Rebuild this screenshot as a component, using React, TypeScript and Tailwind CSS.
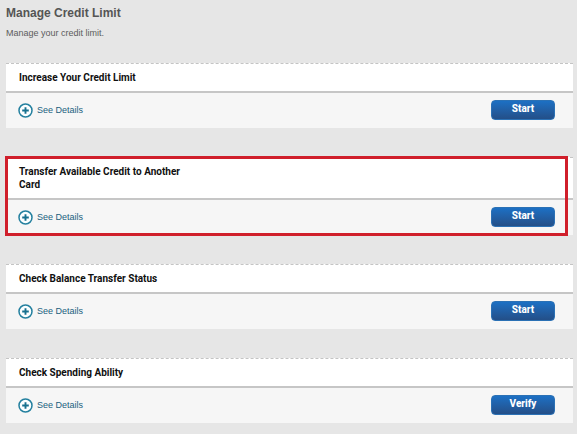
import React from 'react';

interface CreditOption {
    title: string;
    action: string;
    highlighted?: boolean;
}

const options: CreditOption[] = [
    { title: 'Increase Your Credit Limit', action: 'Start' },
    { title: 'Transfer Available Credit to Another Card', action: 'Start', highlighted: true },
    { title: 'Check Balance Transfer Status', action: 'Start' },
    { title: 'Check Spending Ability', action: 'Verify' },
];

const PlusCircle: React.FC = () => (
    <svg viewBox="0 0 15 15" className="size-[15px] shrink-0" fill="none" aria-hidden="true">
        <circle cx="7.5" cy="7.5" r="6.5" fill="#fbfeff" stroke="#24809f" strokeWidth="1.5" />
        <path d="M7.5 4.2v6.6M4.2 7.5h6.6" stroke="#17718f" strokeWidth="1.9" />
    </svg>
);

const OptionCard: React.FC<{ option: CreditOption }> = ({ option }) => (
    <section className="relative">
        <div className="bg-white border-t border-dashed border-t-[#c4c4c4] pl-[13px] pr-3 py-[7px]">
            <h2 className="max-w-[176px] font-[Roboto,sans-serif] text-[10px] leading-[13px] font-bold text-[#101010]">{option.title}</h2>
        </div>
        <div className="flex items-center justify-between bg-[#f6f6f6] border-t-2 border-t-[#c6c6c6] pl-3 pr-[18px] pt-[7px] pb-2">
            <a href="#" className="flex items-center gap-1 text-[9px] leading-[15px] text-[#20617e]">
                <PlusCircle />
                See Details
            </a>
            <button
                type="button"
                className="w-16 h-5 pb-[2px] flex items-center justify-center rounded-[4px] border border-[#2b71b5] bg-linear-to-b from-[#1c70c4] to-[#234f88] font-[Roboto,sans-serif] text-[10px] leading-3 font-extrabold text-white cursor-pointer"
            >
                {option.action}
            </button>
        </div>
        {option.highlighted && (
            <div className="absolute -top-px -bottom-px -left-px right-[5px] border-3 border-[#d01f2b] pointer-events-none" />
        )}
    </section>
);

const App: React.FC = () => {
    return (
        <main className="min-h-screen bg-[#e6e6e6] pl-[6px] pr-1 pt-[5px] pb-[10px] font-['Liberation_Sans',Arial,sans-serif]">
            <header className="mb-[23px]">
                <h1 className="text-[12px] leading-4 font-bold text-[#555555]">Manage Credit Limit</h1>
                <p className="mt-[5px] text-[9px] leading-[14px] text-[#5c5c5c]">Manage your credit limit.</p>
            </header>
            <div className="flex flex-col gap-[29px]">
                {options.map((option) => (
                    <OptionCard key={option.title} option={option} />
                ))}
            </div>
        </main>
    );
};

export default App;
